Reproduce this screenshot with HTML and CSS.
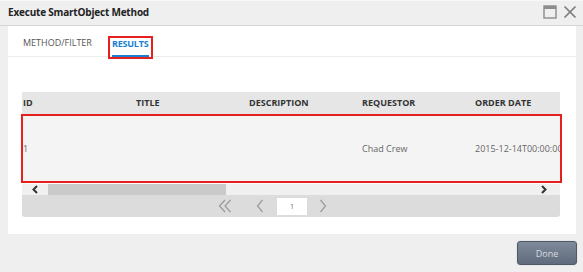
FILE: index.html
```html
<!DOCTYPE html>
<html lang="en">
<head>
    <meta charset="UTF-8">
    <title>Execute SmartObject Method</title>
    <link rel="stylesheet" href="styles.css">
</head>
<body>
    <div class="titlebar">
        <span class="title">Execute SmartObject Method</span>
        <div class="window-buttons">
            <svg width="14" height="14" viewBox="0 0 14 14">
                <rect x="1" y="1" width="12" height="12" fill="none" stroke="#8c8c8c" stroke-width="1.4"/>
                <rect x="1" y="1" width="12" height="3" fill="#8c8c8c"/>
            </svg>
            <svg width="14" height="14" viewBox="0 0 14 14">
                <path d="M1.5 1.5 L12.5 12.5 M12.5 1.5 L1.5 12.5" stroke="#7c7c7c" stroke-width="1.7"/>
            </svg>
        </div>
    </div>

    <div class="dialog">
        <div class="tabs">
            <span class="tab">METHOD/FILTER</span>
            <span class="tab-mark"><span class="tab active">RESULTS</span></span>
        </div>

        <div class="content">
            <div class="grid">
                <div class="grid-view">
                    <div class="grid-row grid-head">
                        <div>ID</div>
                        <div>TITLE</div>
                        <div>DESCRIPTION</div>
                        <div>REQUESTOR</div>
                        <div>ORDER DATE</div>
                    </div>
                    <div class="grid-row grid-data">
                        <div>1</div>
                        <div></div>
                        <div></div>
                        <div>Chad Crew</div>
                        <div>2015-12-14T00:00:00</div>
                    </div>
                </div>
                <div class="row-mark"></div>

                <div class="hscroll">
                    <span class="scroll-btn">
                        <svg width="8" height="9" viewBox="0 0 8 9"><path d="M6 1 L2.5 4.5 L6 8" fill="none" stroke="#333" stroke-width="2"/></svg>
                    </span>
                    <span class="scroll-thumb"></span>
                    <span class="scroll-track"></span>
                    <span class="scroll-btn right">
                        <svg width="8" height="9" viewBox="0 0 8 9"><path d="M2 1 L5.5 4.5 L2 8" fill="none" stroke="#333" stroke-width="2"/></svg>
                    </span>
                </div>

                <div class="pager">
                    <svg class="pg-icon" width="14" height="14" viewBox="0 0 14 14"><path d="M7 1 L1.5 7 L7 13 M12.5 1 L7 7 L12.5 13" fill="none" stroke="#9a9a9a" stroke-width="1.2"/></svg>
                    <svg class="pg-icon" width="8" height="14" viewBox="0 0 8 14"><path d="M6.5 1 L1.5 7 L6.5 13" fill="none" stroke="#9a9a9a" stroke-width="1.2"/></svg>
                    <span class="page-box">1</span>
                    <svg class="pg-icon" width="8" height="14" viewBox="0 0 8 14"><path d="M1.5 1 L6.5 7 L1.5 13" fill="none" stroke="#9a9a9a" stroke-width="1.2"/></svg>
                </div>
            </div>
        </div>
    </div>

    <div class="footer">
        <button class="done">Done</button>
    </div>
</body>
</html>
```

FILE: styles.css
```css
body {
    margin: 0;
    background-color: #efefef;
    font-family: "Open Sans", "DejaVu Sans", sans-serif;
    width: 583px;
    height: 272px;
    overflow: hidden;
}
.titlebar {
    height: 26px;
    display: flex;
    align-items: center;
    justify-content: space-between;
    padding: 0 7px 0 8px;
    border-bottom: 1px solid #d4d4d4;
    border-top: 1px solid #f7f7f7;
    box-sizing: border-box;
}
.title {
    font-size: 10px;
    font-weight: bold;
    color: #222;
    letter-spacing: -0.2px;
    padding-bottom: 2px;
}
.window-buttons {
    display: flex;
    gap: 6px;
    margin-right: -1px;
    padding-bottom: 2px;
}
.dialog {
    background-color: #fff;
    margin: 0 7px 0 8px;
    height: 208px;
}
.tabs {
    height: 31px;
    border-bottom: 1px solid #ececec;
    box-sizing: border-box;
    display: flex;
    align-items: flex-start;
    padding-left: 15px;
    gap: 16px;
}
.tab {
    font-size: 9px;
    color: #555;
    display: inline-block;
    line-height: 12px;
    margin-top: 11px;
}
.tab-mark {
    display: flex;
    align-items: flex-start;
    border: 2px solid #e5201f;
    margin-top: 10px;
    height: 23px;
    width: 45px;
    box-sizing: border-box;
    padding: 0 2px;
}
.tab.active {
    color: #1a7fd2;
    font-weight: bold;
    margin-top: 0;
    padding-bottom: 5px;
    border-bottom: 2.5px solid #1a7fd2;
    letter-spacing: -0.2px;
}
.content {
    padding: 35px 16px 0 14px;
}
.grid {
    position: relative;
}
.grid-view {
    overflow: hidden;
}
.grid-row {
    display: grid;
    grid-template-columns: repeat(5, 113px);
    width: 565px;
}
.grid-row div {
    padding-left: 1px;
    white-space: nowrap;
}
.grid-head {
    height: 22px;
    line-height: 22px;
    background-color: #e6e6e6;
    font-size: 9px;
    font-weight: bold;
    color: #333;
}
.grid-data {
    height: 69px;
    line-height: 69px;
    background-color: #f4f4f4;
    font-size: 9px;
    color: #666;
}
.row-mark {
    position: absolute;
    top: 22px;
    left: -1px;
    right: -2px;
    height: 69px;
    border: 2px solid #e5201f;
    box-sizing: border-box;
}
.hscroll {
    height: 11px;
    display: flex;
    background-color: #f0f0f0;
    margin-top: 1px;
}
.scroll-btn {
    width: 26px;
    display: flex;
    align-items: center;
    justify-content: center;
    background-color: #f0f0f0;
}
.scroll-btn.right {
    width: 32px;
}
.scroll-thumb {
    width: 178px;
    background-color: #cacaca;
}
.scroll-track {
    flex: 1;
}
.pager {
    height: 22px;
    background-color: #dcdcdc;
    border-radius: 0 0 3px 3px;
    display: flex;
    align-items: center;
    padding-left: 196px;
    box-sizing: border-box;
}
.pg-icon {
    margin-right: 25px;
}
.pg-icon:first-child {
    margin-right: 24px;
}
.page-box {
    width: 30px;
    height: 17px;
    background-color: #fff;
    font-size: 7px;
    color: #666;
    text-align: center;
    line-height: 17px;
    margin: 0 12px 0 -12px;
}
.footer {
    display: flex;
    justify-content: flex-end;
    padding: 7px 6px 0 0;
}
.done {
    width: 60px;
    height: 24px;
    border: 1px solid #4f5968;
    border-radius: 3px;
    background: linear-gradient(#7e899a, #606c7d);
    color: #d8dce2;
    font-family: "Open Sans", "DejaVu Sans", sans-serif;
    font-size: 9px;
    padding: 0;
    box-shadow: 0 0 0 1px #e6e6e6;
}
```
